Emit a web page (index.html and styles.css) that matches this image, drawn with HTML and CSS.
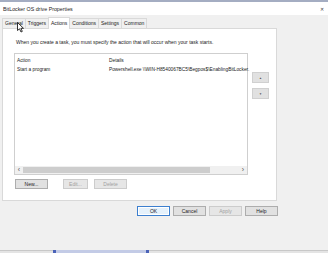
FILE: index.html
```html
<!DOCTYPE html>
<html lang="en">
<head>
    <meta charset="UTF-8">
    <title>BitLocker OS drive Properties</title>
    <link rel="stylesheet" href="styles.css">
</head>
<body>
    <div class="window">
        <div class="titlebar">
            <span class="title">BitLocker OS drive Properties</span>
            <span class="close">&#x2715;</span>
        </div>

        <div class="dialog">
            <div class="tabs">
                <div class="tab">General</div>
                <div class="tab">Triggers</div>
                <div class="tab active">Actions</div>
                <div class="tab">Conditions</div>
                <div class="tab">Settings</div>
                <div class="tab">Common</div>
                <svg class="cursor" width="8" height="11" viewBox="0 0 8 11">
                    <path d="M0.5 0.5 L0.5 8.5 L2.5 6.8 L4 10 L5.3 9.4 L3.9 6.3 L6.5 6.3 Z" fill="#fff" stroke="#000" stroke-width="0.8"/>
                </svg>
            </div>

            <div class="panel">
                <p class="desc">When you create a task, you must specify the action that will occur when your task starts.</p>

                <div class="list-row">
                    <div class="listbox">
                        <div class="list-head">
                            <span class="col-action">Action</span>
                            <span class="col-details">Details</span>
                        </div>
                        <div class="list-item">
                            <span class="col-action">Start a program</span>
                            <span class="col-details">Powershell.exe \\WIN-H8540067BC5\Begpos$\EnablingBitLocker.</span>
                        </div>
                        <div class="hscroll">
                            <span class="arrow">&lsaquo;</span>
                            <div class="track"><div class="thumb"></div></div>
                            <span class="arrow">&rsaquo;</span>
                        </div>
                    </div>
                    <div class="side-buttons">
                        <button class="btn small">&#9650;</button>
                        <button class="btn small">&#9660;</button>
                    </div>
                </div>

                <div class="list-buttons">
                    <button class="btn">New...</button>
                    <button class="btn disabled">Edit...</button>
                    <button class="btn disabled">Delete</button>
                </div>
            </div>

            <div class="footer">
                <button class="btn default">OK</button>
                <button class="btn">Cancel</button>
                <button class="btn disabled">Apply</button>
                <button class="btn">Help</button>
            </div>
        </div>

        <div class="taskbar">
            <div class="task"></div>
        </div>
    </div>
</body>
</html>
```

FILE: styles.css
```css
* {
    box-sizing: border-box;
    margin: 0;
    padding: 0;
}

body {
    width: 328px;
    height: 253px;
    overflow: hidden;
    background: #f0f0f0;
    font-family: 'Liberation Sans', Arial, sans-serif;
    font-size: 5px;
    color: #1a1a1a;
}

.window {
    height: 253px;
    display: flex;
    flex-direction: column;
    border-top: 2px solid #a4adc2;
}

.titlebar {
    height: 13px;
    background: #fff;
    display: flex;
    align-items: center;
    justify-content: space-between;
    padding: 0 4px 0 3px;
}

.title {
    font-size: 5.3px;
    color: #222;
}

.close {
    font-size: 5px;
    color: #444;
}

.dialog {
    flex: 1;
    padding: 2px 0 0 2px;
}

.tabs {
    display: flex;
    align-items: flex-end;
    height: 11px;
    position: relative;
}

.tab {
    height: 10px;
    padding: 0 2px;
    font-size: 5px;
    line-height: 9px;
    background: #f0f0f0;
    border: 1px solid #d9d9d9;
    border-bottom: none;
    margin-right: -1px;
    color: #222;
}

.tab.active {
    background: #fff;
    height: 12px;
    margin-bottom: -1px;
    line-height: 10px;
    position: relative;
    z-index: 2;
}

.cursor {
    position: absolute;
    left: 15px;
    top: 5px;
    z-index: 3;
}

.panel {
    width: 275px;
    height: 173px;
    background: #fff;
    border: 1px solid #d9d9d9;
    padding: 10px 0 0 11px;
    position: relative;
    z-index: 1;
}

.desc {
    font-size: 5px;
    color: #222;
    margin-left: 2px;
}

.list-row {
    display: flex;
    gap: 4px;
    margin-top: 8px;
}

.listbox {
    width: 234px;
    height: 122px;
    border: 1px solid #cfcfcf;
    display: flex;
    flex-direction: column;
    font-size: 4.8px;
}

.list-head,
.list-item {
    display: flex;
    padding-left: 2px;
    height: 9px;
    align-items: center;
}

.list-head {
    margin-top: 2px;
}

.col-action {
    width: 92px;
    flex-shrink: 0;
}

.col-details {
    white-space: nowrap;
    font-size: 4.8px;
}

.hscroll {
    margin-top: auto;
    height: 8px;
    display: flex;
    align-items: center;
    background: #f0f0f0;
}

.arrow {
    width: 8px;
    text-align: center;
    font-size: 7px;
    line-height: 8px;
    color: #555;
}

.track {
    flex: 1;
    height: 8px;
    display: flex;
    align-items: center;
}

.thumb {
    width: 187px;
    height: 6px;
    background: #cdcdcd;
}

.side-buttons {
    display: flex;
    flex-direction: column;
    gap: 5px;
    padding-top: 19px;
}

.btn {
    font-family: inherit;
    font-size: 5px;
    background: #e1e1e1;
    border: 1px solid #adadad;
    color: #222;
    height: 10px;
    width: 33px;
    line-height: 8px;
}

.btn.small {
    width: 17px;
    height: 11px;
    font-size: 3px;
    border-color: #d0d0d0;
    color: #555;
}

.btn.disabled {
    color: #a0a0a0;
    border-color: #cccccc;
    background: #e6e6e6;
}

.btn.default {
    border-color: #3c7fcf;
    background: #e5f1fb;
    box-shadow: inset 0 0 0 1px #fff;
}

.list-buttons {
    display: flex;
    gap: 15px;
    margin-top: 4px;
    margin-left: 1px;
}

.list-buttons .btn:nth-child(2) {
    width: 25px;
}

.list-buttons .btn:nth-child(3) {
    margin-left: -9px;
}

.footer {
    display: flex;
    justify-content: flex-end;
    gap: 3px;
    width: 276px;
    margin-top: 5px;
}

.taskbar {
    height: 3px;
    background: #e4e4e4;
    border-top: 1px solid #c8c8c8;
    position: relative;
}

.task {
    position: absolute;
    left: 53px;
    top: -1px;
    width: 96px;
    height: 3px;
    background: #c3cbe6;
    border-left: 3px solid #4a62b8;
    border-right: 3px solid #4a62b8;
}
```
